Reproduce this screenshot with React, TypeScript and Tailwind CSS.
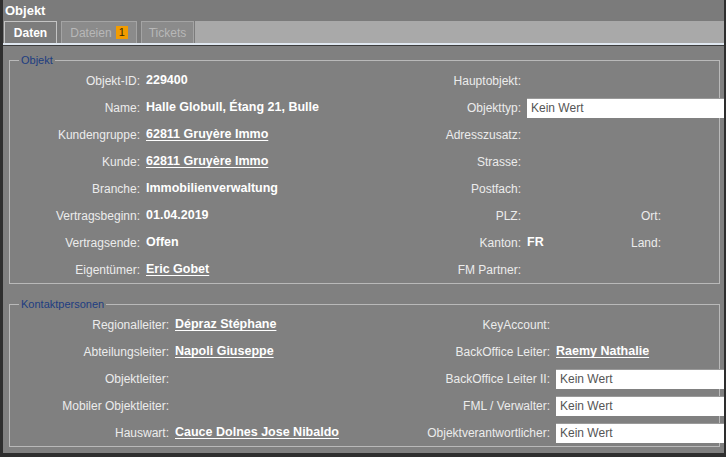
import React from 'react';

type Row = {
  label: string;
  value?: string;
  link?: boolean;
  input?: boolean;
};

const font = { fontFamily: '"Liberation Sans", Arial, sans-serif' };

const Value: React.FC<{ row: Row }> = ({ row }) => {
  if (row.input) {
    return (
      <div className="flex-1 -mr-[8px] h-[20px] bg-white border-t border-[#9a9a9a] flex items-center pl-[4px] text-[12px] text-[#555]">
        Kein Wert
      </div>
    );
  }
  if (!row.value) return null;
  return (
    <span className={`text-[12.5px] font-bold text-white whitespace-nowrap ${row.link ? 'underline underline-offset-2' : ''}`}>
      {row.value}
    </span>
  );
};

const Field: React.FC<{ row: Row; labelW: string }> = ({ row, labelW }) => (
  <div className="flex items-center flex-1 min-w-0">
    <span className={`${labelW} shrink-0 text-right text-[12px] text-[#ececec] whitespace-nowrap`}>{row.label}:</span>
    <div className="flex items-center flex-1 min-w-0 pl-[6px]">
      <Value row={row} />
    </div>
  </div>
);

const Group: React.FC<{ title: string; children: React.ReactNode; className?: string }> = ({ title, children, className }) => (
  <fieldset className={`border border-[#b9b9b9] ml-[6px] mr-[4px] pl-[1px] ${className ?? ''}`}>
    <legend className="ml-[8px] px-[2px] text-[11px] leading-[14px] text-[#1d3d80]">{title}</legend>
    {children}
  </fieldset>
);

const objektLeft: Row[] = [
  { label: 'Objekt-ID', value: '229400' },
  { label: 'Name', value: 'Halle Globull, Étang 21, Bulle' },
  { label: 'Kundengruppe', value: '62811 Gruyère Immo', link: true },
  { label: 'Kunde', value: '62811 Gruyère Immo', link: true },
  { label: 'Branche', value: 'Immobilienverwaltung' },
  { label: 'Vertragsbeginn', value: '01.04.2019' },
  { label: 'Vertragsende', value: 'Offen' },
  { label: 'Eigentümer', value: 'Eric Gobet', link: true },
];

const objektRight: Row[] = [
  { label: 'Hauptobjekt' },
  { label: 'Objekttyp', input: true },
  { label: 'Adresszusatz' },
  { label: 'Strasse' },
  { label: 'Postfach' },
  { label: 'PLZ' },
  { label: 'Kanton', value: 'FR' },
  { label: 'FM Partner' },
];

const extra: Record<number, string> = { 5: 'Ort', 6: 'Land' };

const kontaktLeft: Row[] = [
  { label: 'Regionalleiter', value: 'Dépraz Stéphane', link: true },
  { label: 'Abteilungsleiter', value: 'Napoli Giuseppe', link: true },
  { label: 'Objektleiter' },
  { label: 'Mobiler Objektleiter' },
  { label: 'Hauswart', value: 'Cauce Dolnes Jose Nibaldo', link: true },
];

const kontaktRight: Row[] = [
  { label: 'KeyAccount' },
  { label: 'BackOffice Leiter', value: 'Raemy Nathalie', link: true },
  { label: 'BackOffice Leiter II', input: true },
  { label: 'FML / Verwalter', input: true },
  { label: 'Objektverantwortlicher', input: true },
];

export default function App() {
  return (
    <div style={font} className="w-[726px] h-[457px] overflow-hidden bg-[#808080] border-l-[3px] border-r-[2px] border-b-[4px] border-[#2e2e2e] flex flex-col">
      {/* title */}
      <div className="h-[21px] shrink-0 bg-[#7b7b7b] flex items-center pl-[2px] text-[13px] font-bold text-white">Objekt</div>

      {/* tabs */}
      <div className="h-[22px] shrink-0 flex bg-[#7b7b7b] pl-[1px]">
        <div className="w-[53px] border border-[#c4c4c4] border-b-0 bg-[#7c7c7c] flex items-center justify-center text-[12px] font-bold text-white">Daten</div>
        <div className="w-[4px]" />
        <div className="w-[76px] border border-[#a4a4a4] border-b-0 bg-[#8b8b8b] flex items-center justify-center gap-[4px] text-[12px] text-[#b8b8b8]">
          Dateien
          <span className="bg-[#f29c00] text-[#3a2a00] text-[11px] leading-[13px] px-[3px]">1</span>
        </div>
        <div className="w-[4px]" />
        <div className="w-[53px] border border-[#a4a4a4] border-b-0 bg-[#8b8b8b] flex items-center justify-center text-[12px] text-[#b8b8b8]">Tickets</div>
        <div className="flex-1 ml-[1px] bg-[#a9a9a9]" />
      </div>
      <div className="h-[2px] shrink-0 bg-[#dfe7f0]" />
      <div className="h-[1px] shrink-0 bg-[#3c3c3c]" />

      <div className="mt-[7px]">
        <Group title="Objekt">
          {objektLeft.map((l, i) => (
            <div key={l.label} className="flex h-[27px] items-center">
              <div className="w-[390px] flex">
                <Field row={l} labelW="w-[129px]" />
              </div>
              <div className="flex-1 flex items-center">
                <Field row={objektRight[i]} labelW="w-[120px]" />
                {extra[i] && (
                  <div className="flex items-center w-[93px] shrink-0 mr-[5px]">
                    <span className="w-[40px] text-right text-[12px] text-[#ececec]">{extra[i]}:</span>
                  </div>
                )}
              </div>
            </div>
          ))}
        </Group>

        <Group title="Kontaktpersonen" className="mt-[13px]">
          {kontaktLeft.map((l, i) => (
            <div key={l.label} className="flex h-[27px] items-center">
              <div className="w-[390px] flex">
                <Field row={l} labelW="w-[158px]" />
              </div>
              <div className="flex-1 flex items-center">
                <Field row={kontaktRight[i]} labelW="w-[149px]" />
              </div>
            </div>
          ))}
        </Group>
      </div>
    </div>
  );
}
